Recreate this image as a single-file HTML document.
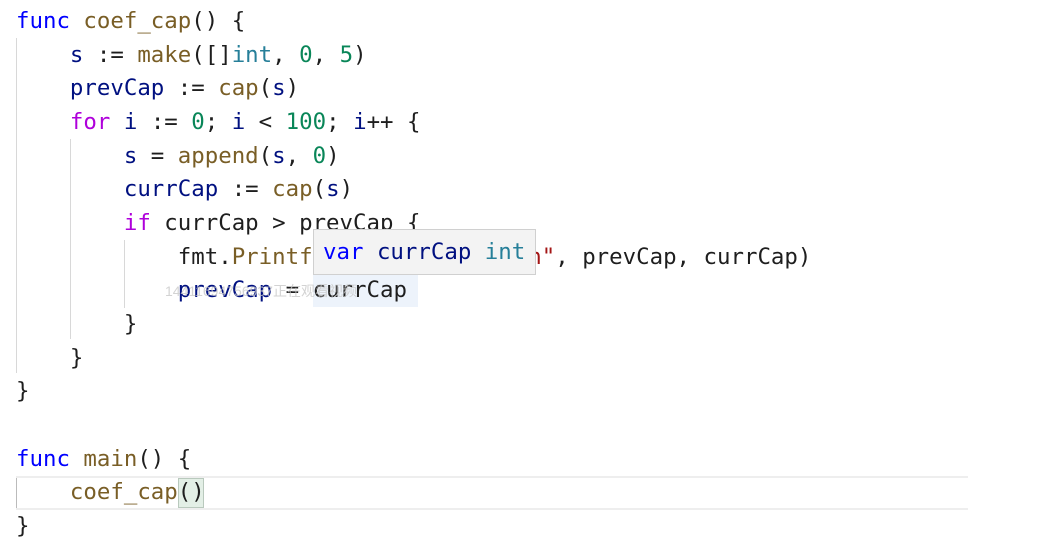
<!DOCTYPE html>
<html><head><meta charset="utf-8"><style>
html,body{margin:0;padding:0;background:#fff;width:1040px;height:556px;overflow:hidden;position:relative}
.code{position:absolute;left:16px;top:5px;font-family:"DejaVu Sans Mono","Liberation Mono",monospace;font-size:22.4px;line-height:33.67px;color:#1e1e1e;white-space:pre}
.k{color:#0000ff}.f{color:#795e26}.v{color:#001080}.t{color:#267f99}.n{color:#098658}.p{color:#af00db}.s{color:#a31515}
.g{position:absolute;width:1px;background:#d8d8d8}
.tip{position:absolute;left:313px;top:229px;width:223px;height:46px;background:#f3f3f3;border:1px solid #d0d0d0;box-sizing:border-box;font-family:"DejaVu Sans Mono","Liberation Mono",monospace;font-size:22.4px;line-height:44px;padding-left:9px;white-space:pre}
</style></head><body>
<div style="position:absolute;left:16px;top:476px;width:952px;height:34px;border-top:2px solid #eee;border-bottom:2px solid #eee;box-sizing:border-box"></div>
<div style="position:absolute;left:178px;top:478px;width:26px;height:30px;background:#e3efe6;border:1px solid #b9c9bd;box-sizing:border-box"></div>
<div style="position:absolute;left:313px;top:274px;width:105px;height:33px;background:#edf3fb"></div>
<div class="g" style="left:16px;top:38px;height:335px"></div>
<div class="g" style="left:70px;top:139px;height:200px"></div>
<div class="g" style="left:124px;top:240px;height:68px"></div>
<div class="g" style="left:16px;top:478px;height:30px;background:#bbb"></div>
<div class="code"><span class="k">func</span> <span class="f">coef_cap</span>() {
    <span class="v">s</span> := <span class="f">make</span>([]<span class="t">int</span>, <span class="n">0</span>, <span class="n">5</span>)
    <span class="v">prevCap</span> := <span class="f">cap</span>(<span class="v">s</span>)
    <span class="p">for</span> <span class="v">i</span> := <span class="n">0</span>; <span class="v">i</span> &lt; <span class="n">100</span>; <span class="v">i</span>++ {
        <span class="v">s</span> = <span class="f">append</span>(<span class="v">s</span>, <span class="n">0</span>)
        <span class="v">currCap</span> := <span class="f">cap</span>(<span class="v">s</span>)
        <span class="p">if</span> currCap &gt; prevCap {
            fmt.<span class="f">Printf</span>(<span class="s">"cap: %d -&gt; %d\n"</span>, prevCap, currCap)
            <span class="v">prevCap</span> = currCap
        }
    }
}

<span class="k">func</span> <span class="f">main</span>() {
    <span class="f">coef_cap</span>()
}</div>
<div class="tip"><span class="k">var</span> <span class="v">currCap</span> <span class="t">int</span></div>
<div style="position:absolute;left:165px;top:281px;font-family:'Liberation Sans','Noto Sans CJK SC',sans-serif;font-size:14px;color:rgba(200,200,200,0.8)">14411694756937正在观看视频</div>
</body></html>
